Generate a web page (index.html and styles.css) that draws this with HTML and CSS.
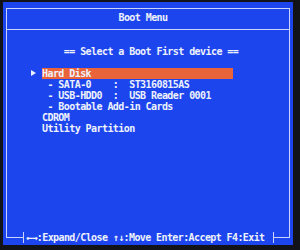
FILE: index.html
```html
<!DOCTYPE html>
<html lang="en">
<head>
    <meta charset="UTF-8">
    <title>Boot Menu</title>
    <link rel="stylesheet" href="styles.css">
</head>
<body>

<div class="screen">
    <div class="frame">
        <!-- Title bar -->
        <div class="header">Boot Menu</div>

        <div class="content">
            <p class="prompt">== Select a Boot First device ==</p>

            <ul class="devices">
                <li class="device selected"><span class="marker"></span><span class="label">Hard Disk</span></li>
                <li class="device"><span class="marker"></span><span class="label"> - SATA-0    :  ST3160815AS</span></li>
                <li class="device"><span class="marker"></span><span class="label"> - USB-HDD0  :  USB Reader 0001</span></li>
                <li class="device"><span class="marker"></span><span class="label"> - Bootable Add-in Cards</span></li>
                <li class="device"><span class="marker"></span><span class="label">CDROM</span></li>
                <li class="device"><span class="marker"></span><span class="label">Utility Partition</span></li>
            </ul>
        </div>
    </div>

    <!-- Key help, sits on the bottom edge of the frame -->
    <div class="footer">
        <span class="edge edge-left"></span>
        <span class="tick"></span>
        <span class="keys">←→:Expand/Close ↑↓:Move Enter:Accept F4:Exit</span>
        <span class="tick"></span>
        <span class="edge edge-right"></span>
    </div>
</div>

</body>
</html>
```

FILE: styles.css
```css
body {
    margin: 0;
    background-color: #121219;
    font-family: "DejaVu Sans Mono", "Liberation Mono", monospace;
    font-weight: bold;
    font-size: 10px;
    letter-spacing: -0.57px;
    color: #eef2fb;
}

.screen {
    display: flex;
    flex-direction: column;
    box-sizing: border-box;
    width: 290px;
    height: 243px;
    margin: 2px 7px 5px 3px;
    padding: 6px 3px 2px 3px;
    background-color: #1c45ee;
}

.frame {
    flex: 1;
    border: 1px solid #c9d3fb;
    border-bottom: none;
}

.header {
    line-height: 18px;
    padding: 0 10px 2px 0;
    text-align: center;
    border-bottom: 1px solid #c9d3fb;
}

.prompt {
    margin: 16px 0 0 0;
    padding-left: 6px;
    line-height: 11px;
    text-align: center;
    white-space: pre;
}

.devices {
    list-style: none;
    margin: 11px 0 0 0;
    padding: 0 0 0 24px;
}

.device {
    display: flex;
    height: 11px;
    line-height: 11px;
}

.marker {
    flex: 0 0 11px;
    position: relative;
}

.label {
    width: 191px;
    white-space: pre;
}

.selected .label {
    background-color: #e9643a;
}

/* Little arrow in front of the highlighted entry */
.selected .marker::before {
    content: "";
    position: absolute;
    left: 0;
    top: 2px;
    border-left: 5px solid #eef2fb;
    border-top: 3.5px solid transparent;
    border-bottom: 3.5px solid transparent;
}

/* Footer */
.footer {
    display: flex;
    height: 11px;
    line-height: 11px;
    letter-spacing: -0.6px;
}

.edge {
    height: 5px;
    border-bottom: 1px solid #c9d3fb;
}

.edge-left {
    flex: 0 0 16px;
    border-left: 1px solid #c9d3fb;
}

.edge-right {
    flex: 1;
    border-right: 1px solid #c9d3fb;
}

.tick {
    flex: 0 0 1px;
    background-color: #c9d3fb;
}

.keys {
    padding: 0 8px 0 2px;
    white-space: pre;
}
```
